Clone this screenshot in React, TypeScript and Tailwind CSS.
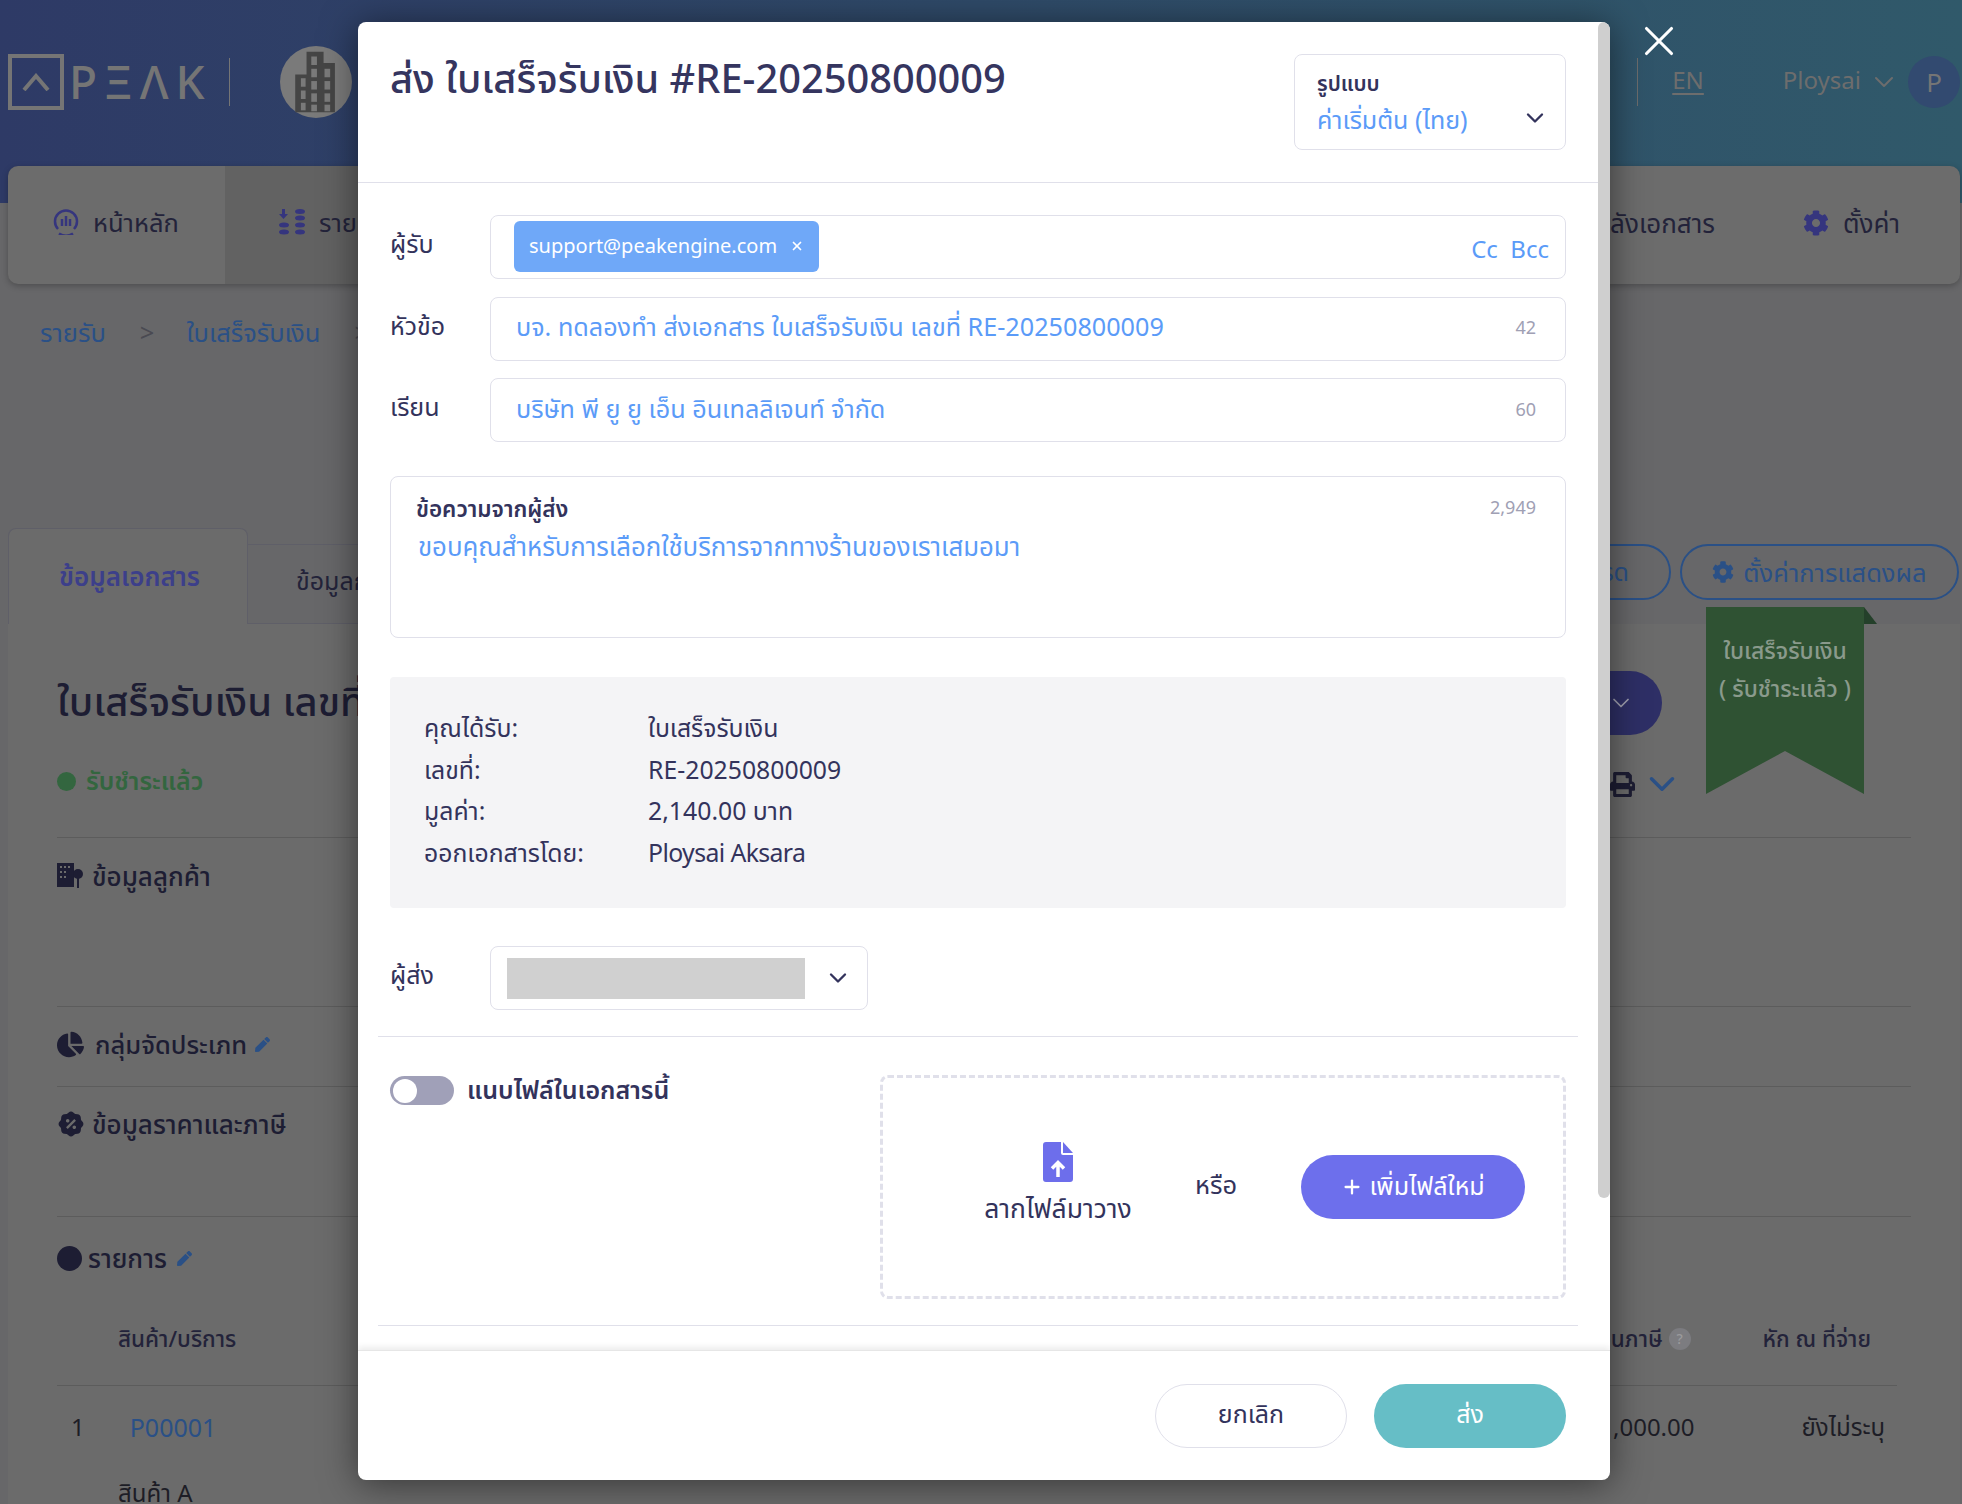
import { FaCog, FaPrint, FaChartPie, FaPen } from "react-icons/fa";
import { RiDiscountPercentFill } from "react-icons/ri";
import { ChevronDown, Plus, X } from "lucide-react";
import { clsx } from "clsx";

function Pencil({ className }: { className?: string }) {
  return <FaPen className={clsx("h-[15px] w-[15px] text-[#2a5086]", className)} />;
}

function BuildingAvatar() {
  return (
    <div className="flex h-[72px] w-[72px] items-center justify-center rounded-full bg-[#7a7a7a]">
      <svg viewBox="0 0 48 72" className="h-[68px] w-[46px]" fill="#454545">
        <path d="M14 4h18v12h12v52H2V28h12z" />
        <g fill="#7a7a7a">
          <rect x="19" y="9" width="6" height="9" />
          <rect x="19" y="22" width="6" height="9" />
          <rect x="19" y="35" width="6" height="9" />
          <rect x="19" y="48" width="6" height="9" />
          <rect x="33" y="22" width="6" height="9" />
          <rect x="33" y="35" width="6" height="9" />
          <rect x="33" y="48" width="6" height="9" />
          <rect x="8" y="32" width="5" height="9" />
          <rect x="8" y="45" width="5" height="9" />
          <rect x="8" y="58" width="5" height="8" />
          <rect x="19" y="60" width="6" height="7" />
          <rect x="33" y="60" width="6" height="7" />
        </g>
      </svg>
    </div>
  );
}

function Header() {
  return (
    <header className="flex h-[203px] items-start bg-gradient-to-r from-[#2e3a66] via-[#2f4a68] to-[#30596a] pr-[2px] pl-[8px]">
      <div className="mt-[54px] flex h-[56px] w-[56px] items-center justify-center border-[4px] border-[#757575]">
        <svg viewBox="0 0 28 18" className="w-[28px]" fill="none" stroke="#757575" strokeWidth="4">
          <path d="M2 17 14 3l12 14" />
        </svg>
      </div>
      <div className="mt-[46px] ml-[5px] w-[160px] text-[46px] leading-[70px] font-medium tracking-[7px] text-[#757575]">PΞΛK</div>
      <div className="mt-[58px] h-[48px] w-px bg-[#757575]" />
      <div className="mt-[46px] ml-[50px]">
        <BuildingAvatar />
      </div>
      <div className="ml-auto flex items-start">
        <div className="mt-[58px] h-[48px] w-px bg-[#6b6b6b]" />
        <div className="mt-[64px] ml-[34px] text-[24px] leading-[32px] text-[#6d6d6d] underline underline-offset-4">EN</div>
        <div className="mt-[64px] ml-[79px] text-[24px] leading-[32px] text-[#6d6d6d]">Ploysai</div>
        <ChevronDown className="mt-[66px] ml-[7px] h-[32px] w-[32px] text-[#6d6d6d]" strokeWidth={1.5} />
        <div className="mt-[56px] ml-[8px] flex h-[52px] w-[52px] items-center justify-center rounded-full bg-[#324a70] text-[26px] text-[#757575]">P</div>
      </div>
    </header>
  );
}

function Nav() {
  return (
    <nav className="relative mr-[2px] -mt-[37px] ml-[8px] flex h-[118px] rounded-[10px] bg-[#6c6c6c] shadow-[0_2px_6px_rgba(0,0,0,0.25)]">
      <div className="flex w-[217px] items-center gap-[14px] rounded-l-[10px] pb-[6px] pl-[45px] text-[25.5px] text-[#23233a]">
        <svg viewBox="0 0 26 26" className="h-[26px] w-[26px]" fill="none" stroke="#35357e" strokeWidth="2.5">
          <path d="M5 20A11 11 0 1 1 21 20" />
          <path d="M6 24.500a13 13 0 0 0 14 0" />
          <path d="M9 10v7M13 7v10M17 10v7" />
        </svg>
        หน้าหลัก
      </div>
      <div className="flex w-[140px] items-center gap-[14px] bg-[#626262] pb-[6px] pl-[54px] text-[25.5px] text-[#23233a]">
        <svg viewBox="0 0 26 26" className="h-[26px] w-[26px] shrink-0" fill="#35357e">
          <path d="M3 0h3v5h3l-4.500 5L0 5h3z" />
          <ellipse cx="5" cy="16" rx="5" ry="2.500" />
          <ellipse cx="5" cy="23" rx="5" ry="2.500" />
          <ellipse cx="21" cy="2.500" rx="5" ry="2.500" />
          <ellipse cx="21" cy="9" rx="5" ry="2.500" />
          <ellipse cx="21" cy="16" rx="5" ry="2.500" />
          <ellipse cx="21" cy="23" rx="5" ry="2.500" />
        </svg>
        รายรับ
      </div>
      <div className="ml-auto flex items-center pb-[4px] text-[26px] text-[#23233a]">
        <span className="mr-[88px]">คลังเอกสาร</span>
        <FaCog className="mr-[14px] h-[26px] w-[26px] text-[#35357e]" />
        <span className="mr-[60px]">ตั้งค่า</span>
      </div>
    </nav>
  );
}

function DimBackground() {
  return (
    <div className="h-full w-full bg-[#676769]">
      <Header />
      <Nav />
      <div className="mt-[28px] flex items-center pl-[40px] text-[25.5px] leading-[40px] text-[#2a5086]">
        รายรับ
        <span className="ml-[34px] text-[#4a4a52]">&gt;</span>
        <span className="ml-[32px]">ใบเสร็จรับเงิน</span>
        <span className="ml-[34px] text-[#4a4a52]">&gt;</span>
      </div>
      <div className="mt-[176px] flex items-end pl-[8px]">
        <div className="flex h-[96px] w-[240px] items-start rounded-t-[8px] border border-b-0 border-[#5f5f68] bg-[#6b6b6b] pt-[29px] pl-[50px] text-[26px] leading-[36px] font-semibold text-[#3c3f8a]">
          ข้อมูลเอกสาร
        </div>
        <div className="h-[80px] w-[111px] overflow-hidden border-y border-[#5f5f68] pt-[17px] pl-[48px] text-[25px] leading-[36px] whitespace-nowrap text-[#23233a]">
          ข้อมูลการ
        </div>
        <div className="mb-[24px] ml-auto flex items-center">
          <div className="flex h-[56px] items-center rounded-full border-2 border-[#2a5086] px-[40px] text-[25px] text-[#2a5086]">
            เรียงลำดับรด
          </div>
          <div className="mr-[3px] ml-[9px] flex h-[56px] w-[279px] items-center justify-center gap-[9px] rounded-full border-2 border-[#2a5086] text-[25.5px] text-[#2a5086]">
            <FaCog className="h-[22px] w-[22px]" />
            ตั้งค่าการแสดงผล
          </div>
        </div>
      </div>
      <section className="relative mr-[2px] ml-[8px] h-[880px] bg-[#6b6b6b] px-[49px]">
        <div className="absolute top-[-17px] left-[1698px] h-[187px] w-[158px] bg-[#2f5233] pt-[24px] text-center text-[23px] leading-[38px] font-medium text-[#8a9a8c] [clip-path:polygon(0_0,100%_0,100%_100%,50%_77%,0_100%)]">
          <div>ใบเสร็จรับเงิน</div>
          <div>( รับชำระแล้ว )</div>
        </div>
        <div className="absolute top-[-17px] left-[1856px] h-[17px] w-[13px] bg-[#24402a] [clip-path:polygon(0_0,100%_100%,0_100%)]" />
        <div className="flex items-start justify-between pt-[47px]">
          <h1 className="mt-[5px] text-[40px] leading-[50px] font-medium whitespace-nowrap text-[#1d1d33]">ใบเสร็จรับเงิน เลขที่ RE-20250800009</h1>
          <div className="mr-[249px] flex h-[64px] w-[100px] items-center justify-end rounded-full bg-[#2e2f66] pr-[27px] text-[#a0a0b0]">
            <ChevronDown className="h-[28px] w-[28px]" strokeWidth={1.5} />
          </div>
        </div>
        <div className="mt-[26px] flex h-[40px] items-center justify-between">
          <div className="flex items-center gap-[10px] text-[25px] font-semibold text-[#33663f]">
            <span className="h-[19px] w-[19px] rounded-full bg-[#33663f]" />
            รับชำระแล้ว
          </div>
          <div className="mt-[6px] mr-[228px] flex items-center gap-[6px]">
            <FaPrint className="h-[25px] w-[25px] text-[#1d1d33]" />
            <ChevronDown className="h-[42px] w-[42px] text-[#2a5086]" strokeWidth={2} />
          </div>
        </div>
        <div className="mt-[36px] h-[169px] border-t border-[#5c5c5c] pt-[20px]">
          <div className="flex items-center gap-[9px] text-[26px] leading-[36px] font-medium text-[#1d1d33]">
            <svg viewBox="0 0 26 26" className="h-[26px] w-[26px]" fill="#1d1d33">
              <path d="M0 0h17v24H0z" />
              <circle cx="21" cy="11" r="5" />
              <path d="M20 14h2v11h-2z" />
              <path d="M3 3h2v2H3zM7 3h2v2H7zM11 3h2v2h-2zM3 8h2v2H3zM7 8h2v2H7zM3 13h2v2H3zM7 13h2v2H7z" fill="#6b6b6b" />
            </svg>
            ข้อมูลลูกค้า
          </div>
        </div>
        <div className="h-[80px] border-t border-[#5c5c5c] pt-[19px]">
          <div className="flex items-center gap-[11px] text-[25.5px] leading-[36px] font-medium text-[#1d1d33]">
            <FaChartPie className="h-[27px] w-[27px]" />
            กลุ่มจัดประเภท
            <Pencil className="-ml-[3px]" />
          </div>
        </div>
        <div className="h-[130px] border-t border-[#5c5c5c] pt-[19px]">
          <div className="flex items-center gap-[7px] text-[26px] leading-[36px] font-medium text-[#1d1d33]">
            <RiDiscountPercentFill className="h-[28px] w-[28px]" />
            ข้อมูลราคาและภาษี
          </div>
        </div>
        <div className="border-t border-[#5c5c5c] pt-[23px]">
          <div className="flex items-center gap-[6px] text-[26px] leading-[36px] font-medium text-[#1d1d33]">
            <span className="h-[25px] w-[25px] rounded-full bg-[#1d1d33]" />
            รายการ
            <Pencil className="ml-[4px]" />
          </div>
          <div className="mt-[47px] mr-[14px] flex h-[63px] items-start border-b border-[#5c5c5c] pr-[26px] pl-[61px] text-[22.5px] leading-[32px] font-medium text-[#23233a]">
            สินค้า/บริการ
            <span className="ml-auto flex items-center gap-[6px]">
              จำนวนภาษี
              <span className="flex h-[22px] w-[22px] items-center justify-center rounded-full bg-[#7c7c80] text-[14px] text-[#9a9a9c]">?</span>
            </span>
            <span className="ml-[72px]">หัก ณ ที่จ่าย</span>
          </div>
          <div className="mt-[23px] flex items-center pr-[26px] pl-[14px] text-[24px] leading-[36px] text-[#1d1d26]">
            1
            <span className="ml-[45px] text-[25px] text-[#2a5086]">P00001</span>
            <span className="ml-auto">1,000.00</span>
            <span className="ml-[107px]">ยังไม่ระบุ</span>
          </div>
          <div className="mt-[30px] pl-[61px] text-[24px] leading-[36px] text-[#1d1d26]">สินค้า A</div>
        </div>
      </section>
    </div>
  );
}

function FieldRow({ label, children }: { label: string; children: React.ReactNode }) {
  return (
    <div className="flex items-center">
      <div className="w-[100px] pb-[6px] text-[25px] text-[#33335c]">{label}</div>
      <div className="flex h-[64px] flex-1 items-center rounded-[8px] border border-[#e0e0ea]">{children}</div>
    </div>
  );
}

function TextField({ label, value, count }: { label: string; value: string; count: string }) {
  return (
    <FieldRow label={label}>
      <span className="pb-[3px] pl-[25px] text-[25.2px] text-[#5b9bf8]">{value}</span>
      <span className="mr-[29px] ml-auto pb-[2px] text-[18px] text-[#a0a0b4]">{count}</span>
    </FieldRow>
  );
}

function InfoRow({ label, value, valueClassName }: { label: string; value: string; valueClassName?: string }) {
  return (
    <div className="flex h-[41.500px] items-center text-[24.8px] text-[#33335c]">
      <span className="w-[224px]">{label}</span>
      <span className={valueClassName}>{value}</span>
    </div>
  );
}

function SendModal() {
  return (
    <div className="absolute top-[22px] left-[358px] z-20 flex h-[1458px] w-[1252px] flex-col overflow-hidden rounded-[8px] bg-white shadow-[0_4px_36px_rgba(0,0,0,0.5)]">
      <div className="absolute top-0 right-0 h-[1176px] w-[12px] rounded-[6px] bg-[#cfcfcf]" />
      <div className="mr-[12px] flex h-[161px] shrink-0 items-start justify-between border-b border-[#e0e0ea] px-[32px]">
        <h2 className="mt-[31px] text-[39.8px] leading-[50px] font-medium text-[#35355f]">ส่ง ใบเสร็จรับเงิน #RE-20250800009</h2>
        <div className="relative mt-[32px] h-[96px] w-[272px] rounded-[8px] border border-[#e0e0ea] pt-[14px] pl-[22px]">
          <div className="text-[21px] leading-[28px] font-semibold text-[#33335c]">รูปแบบ</div>
          <div className="mt-[4px] text-[25px] leading-[36px] text-[#5b9bf8]">ค่าเริ่มต้น (ไทย)</div>
          <ChevronDown className="absolute top-[49px] right-[16px] h-[28px] w-[28px] text-[#33335c]" strokeWidth={2} />
        </div>
      </div>
      <div className="flex-1 pr-[44px] pl-[32px]">
        <div className="flex flex-col gap-[17.500px] pt-[32px]">
          <FieldRow label="ผู้รับ">
            <div className="mb-[2px] ml-[23px] flex h-[51px] w-[305px] items-center justify-between rounded-[6px] bg-[#6fa8f8] px-[15px] text-[20px] text-white">
              support@peakengine.com
              <X className="h-[14px] w-[14px]" strokeWidth={3} />
            </div>
            <span className="mt-[4px] mr-[16px] ml-auto text-[24px] text-[#5b9bf8]">Cc&nbsp; Bcc</span>
          </FieldRow>
          <TextField label="หัวข้อ" value="บจ. ทดลองทำ ส่งเอกสาร ใบเสร็จรับเงิน เลขที่ RE-20250800009" count="42" />
          <TextField label="เรียน" value="บริษัท พี ยู ยู เอ็น อินเทลลิเจนท์ จำกัด" count="60" />
        </div>
        <div className="relative mt-[34px] h-[162px] rounded-[8px] border border-[#e0e0ea] pt-[17px] pl-[25px]">
          <div className="text-[22.5px] leading-[30px] font-semibold text-[#33335c]">ข้อความจากผู้ส่ง</div>
          <div className="mt-[4px] pl-[2px] text-[25.8px] leading-[36px] text-[#5b9bf8]">ขอบคุณสำหรับการเลือกใช้บริการจากทางร้านของเราเสมอมา</div>
          <span className="absolute top-[17px] right-[29px] text-[18px] text-[#a0a0b4]">2,949</span>
        </div>
        <div className="mt-[39px] h-[231px] rounded-[4px] bg-[#f4f4f6] px-[34px] pt-[30px]">
          <InfoRow label="คุณได้รับ:" value="ใบเสร็จรับเงิน" />
          <InfoRow label="เลขที่:" value="RE-20250800009" />
          <InfoRow label="มูลค่า:" value="2,140.00 บาท" />
          <InfoRow label="ออกเอกสารโดย:" value="Ploysai Aksara" valueClassName="tracking-[-0.6px]" />
        </div>
        <div className="mt-[38px] flex items-center">
          <div className="w-[100px] pb-[6px] text-[25px] text-[#33335c]">ผู้ส่ง</div>
          <div className="flex h-[64px] w-[378px] items-center rounded-[8px] border border-[#e0e0ea] pr-[15px] pl-[16px]">
            <div className="h-[41px] w-[298px] bg-[#d0d0d0]" />
            <ChevronDown className="ml-auto h-[28px] w-[28px] text-[#33335c]" strokeWidth={2} />
          </div>
        </div>
        <div className="-mx-[12px] mt-[26px] border-t border-[#e0e0ea]" />
        <div className="mt-[38px] flex items-start justify-between">
          <div className="mt-[1px] flex items-start gap-[13px]">
            <div className="flex h-[29px] w-[64px] items-center rounded-full bg-[#a0a0b8] pl-[3px]">
              <span className="h-[24px] w-[24px] rounded-full bg-white" />
            </div>
            <span className="text-[25px] leading-[26px] font-semibold text-[#33335c]">แนบไฟล์ในเอกสารนี้</span>
          </div>
          <div className="flex h-[224px] w-[686px] items-center rounded-[8px] border-[3px] border-dashed border-[#e0e0ea]">
            <div className="ml-[100px] flex w-[150px] flex-col items-center text-[#33335c]">
              <svg viewBox="0 0 30 40" className="h-[40px] w-[30px]">
                <path d="M3 0h15v11a2 2 0 0 0 2 2h10v24a3 3 0 0 1-3 3H3a3 3 0 0 1-3-3V3a3 3 0 0 1 3-3z" fill="#6d6eeb" />
                <path d="M20 0l10 11H20z" fill="#6d6eeb" />
                <path d="M15 35V21M9 26.500l6-6 6 6" fill="none" stroke="#fff" strokeWidth="3.500" />
              </svg>
              <span className="mt-[8px] mb-[6px] text-[26.5px] leading-[36px] whitespace-nowrap">ลากไฟล์มาวาง</span>
            </div>
            <span className="ml-[62px] pb-[6px] text-[25.5px] text-[#33335c]">หรือ</span>
            <div className="ml-[64px] flex h-[64px] w-[224px] items-center justify-center gap-[6px] rounded-full bg-[#6d6fec] pb-[2px] text-[25px] text-white">
              <Plus className="mt-[2px] h-[22px] w-[22px]" strokeWidth={2.5} />
              เพิ่มไฟล์ใหม่
            </div>
          </div>
        </div>
        <div className="-mx-[12px] mt-[26px] border-t border-[#e0e0ea]" />
      </div>
      <div className="flex h-[130px] shrink-0 items-start justify-end gap-[27px] border-t border-[#e6e6e6] pt-[33px] pr-[44px] shadow-[0_-3px_6px_rgba(0,0,0,0.08)]">
        <div className="flex h-[64px] w-[192px] items-center justify-center rounded-full border border-[#e0e0ea] pb-[4px] text-[25px] text-[#33335c]">ยกเลิก</div>
        <div className="flex h-[64px] w-[192px] items-center justify-center rounded-full bg-[#66bec6] pb-[4px] text-[25px] text-white">ส่ง</div>
      </div>
    </div>
  );
}

export default function App() {
  return (
    <div className="relative h-[1504px] w-[1962px] overflow-hidden font-['Noto_Sans','Noto_Sans_Thai',sans-serif]">
      <DimBackground />
      <SendModal />
      <X className="absolute top-[16px] left-[1634px] z-20 h-[50px] w-[50px] text-white" strokeWidth={1.5} />
    </div>
  );
}
